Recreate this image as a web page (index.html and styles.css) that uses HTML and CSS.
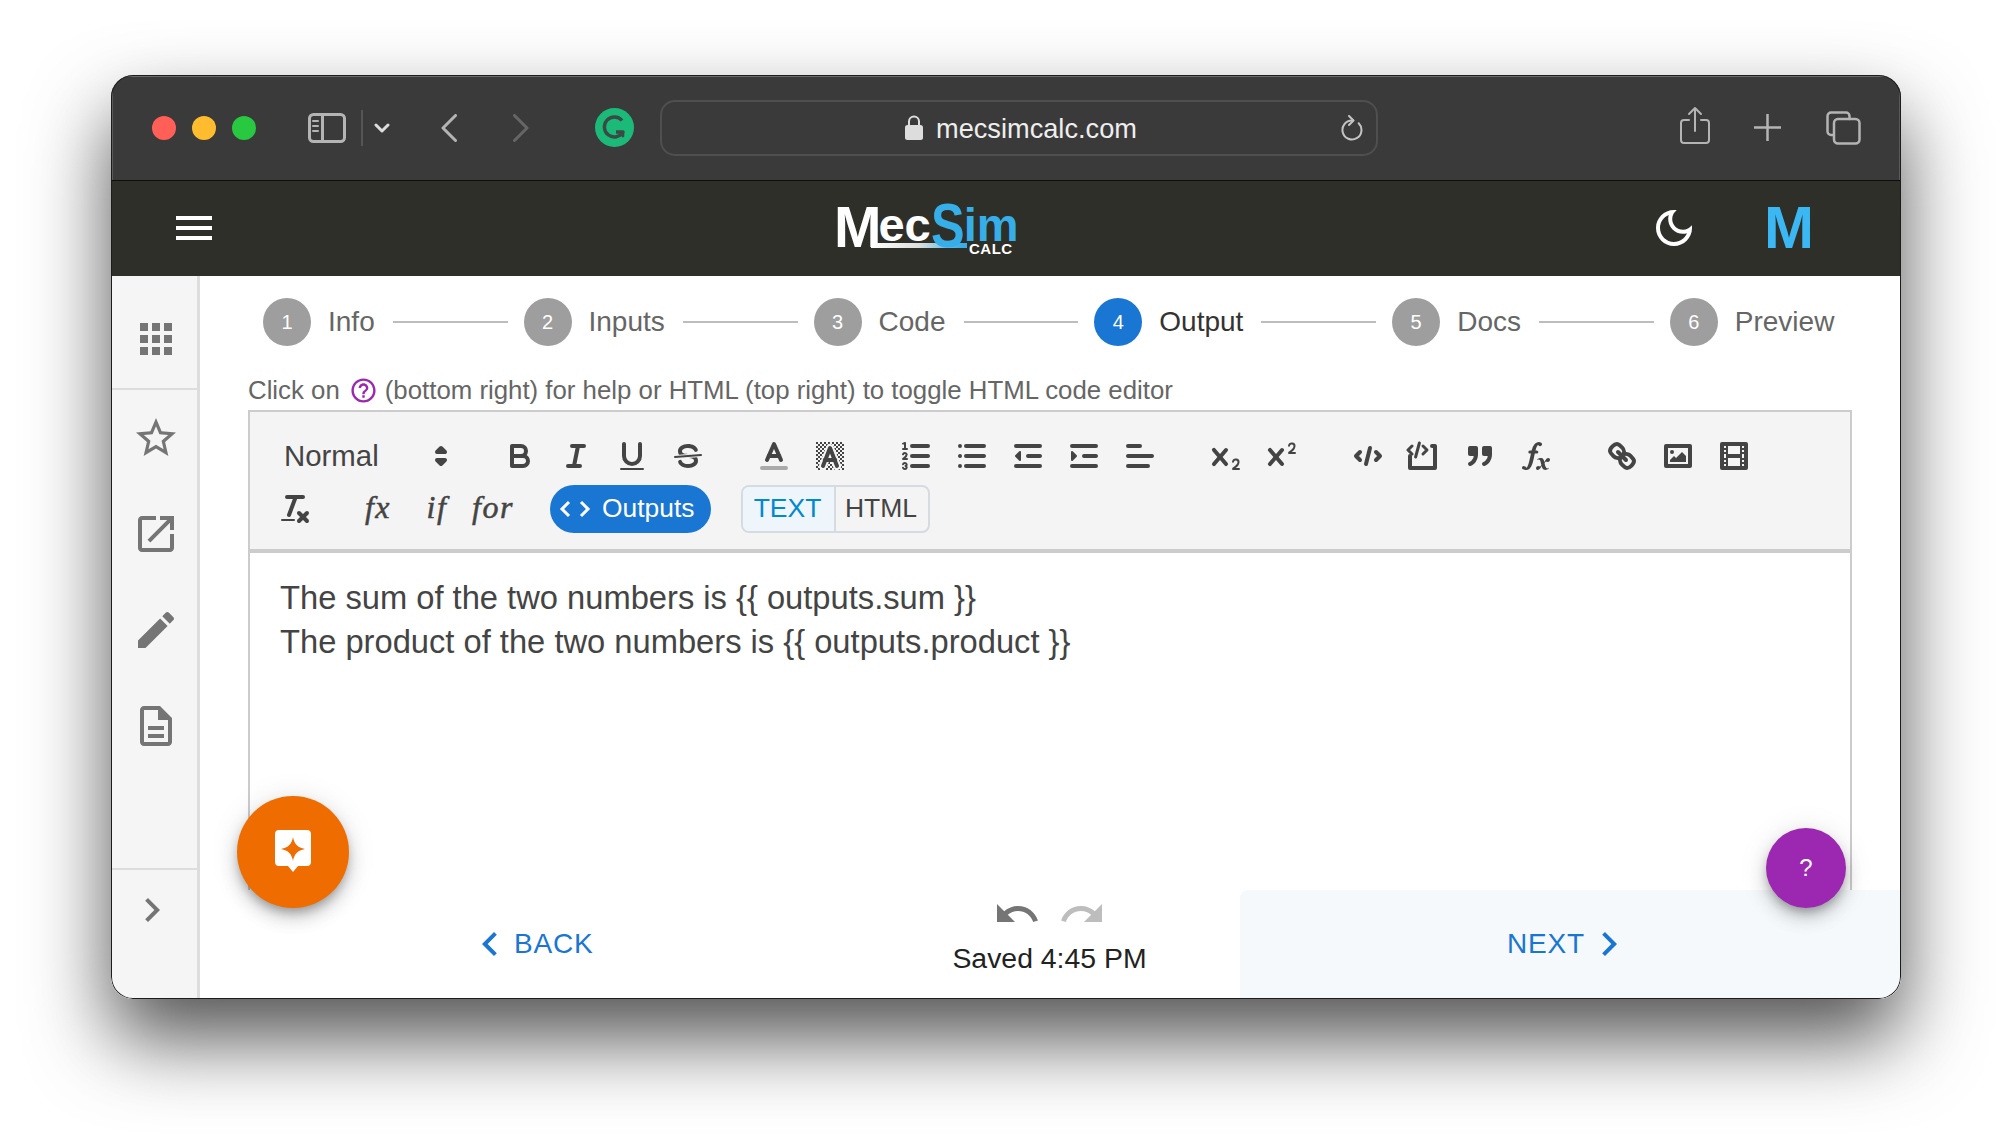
FILE: index.html
```html
<!DOCTYPE html>
<html lang="en">
<head>
<meta charset="UTF-8">
<meta name="viewport" content="width=device-width, initial-scale=1.0">
<title>MecSimCalc</title>
<link rel="stylesheet" href="styles.css">
</head>
<body>
<div class="window">
    <div class="titlebar">
        <span class="light red"></span>
        <span class="light yellow"></span>
        <span class="light green"></span>
        <svg class="tb-sidebar" width="38" height="30" viewBox="0 0 38 30"><rect x="1.5" y="1.5" width="35" height="27" rx="4"/><line x1="14.5" y1="1.5" x2="14.5" y2="28.5"/><path class="thin" d="M5 8h5M5 13h5M5 18h5"/></svg>
        <span class="tb-divider"></span>
        <svg class="tb-down" width="16" height="10" viewBox="0 0 16 10"><path d="M2 2l6 6 6-6"/></svg>
        <svg class="tb-back" width="16" height="28" viewBox="0 0 16 28"><path d="M14.5 1.5L2 14l12.5 12.5"/></svg>
        <svg class="tb-forward" width="16" height="28" viewBox="0 0 16 28"><path d="M1.5 1.5L14 14 1.5 26.5"/></svg>
        <svg class="tb-grammarly" width="39" height="39" viewBox="0 0 39 39"><circle cx="19.5" cy="19.5" r="19.5" fill="#1cba78"/><path d="M27 12.5a10 10 0 1 0 1 11.5h-7" fill="none" stroke="#3a4a44" stroke-width="3.4"/><path d="M24 24l4 4v-4" fill="none" stroke="#3a4a44" stroke-width="2.6"/></svg>
        <div class="url-bar">
            <svg class="lock" width="18" height="25" viewBox="0 0 18 25"><rect x="0" y="10" width="18" height="15" rx="2.5"/><path d="M4 11V6.5a5 5 0 0 1 10 0V11" fill="none" stroke="#ddd" stroke-width="2"/></svg>
            <span class="url-text">mecsimcalc.com</span>
            <svg class="reload" width="22" height="26" viewBox="0 0 22 26"><path d="M17.7 8.300A9.500 9.500 0 1 1 11 5.500"/><path d="M8 1l4.500 4.500L8 10"/></svg>
        </div>
        <svg class="tb-share" width="30" height="38" viewBox="0 0 30 38"><path d="M9 14H4a3 3 0 0 0-3 3v17a3 3 0 0 0 3 3h22a3 3 0 0 0 3-3V17a3 3 0 0 0-3-3h-5"/><path d="M15 25V2M9 8l6-6 6 6"/></svg>
        <svg class="tb-plus" width="27" height="27" viewBox="0 0 27 27"><path d="M13.5 0v27M0 13.5h27"/></svg>
        <svg class="tb-tabs" width="35" height="34" viewBox="0 0 35 34"><path d="M7 24H5a3.500 3.500 0 0 1-3.500-3.500V5A3.500 3.500 0 0 1 5 1.500h15A3.500 3.500 0 0 1 23.500 5v3"/><rect x="8" y="8" width="25.500" height="24.500" rx="4"/></svg>
    </div>

    <header class="app-header">
        <div class="burger"><span></span><span></span><span></span></div>
        <div class="logo">
            <span class="logo-line"></span>
            <span class="logo-big">M</span><span class="logo-small">ec</span><span class="logo-blue"><span class="logo-s">S</span><span class="logo-small">im</span></span>
            <span class="logo-calc">CALC</span>
        </div>
        <svg class="moon" width="48" height="48" viewBox="0 0 24 24"><path d="M9.37 5.51c-.18.64-.27 1.310-.27 1.990 0 4.080 3.320 7.400 7.400 7.400.68 0 1.350-.09 1.990-.27C17.450 17.190 14.930 19 12 19c-3.860 0-7-3.140-7-7 0-2.930 1.810-5.450 4.370-6.490zM12 3c-4.970 0-9 4.030-9 9s4.030 9 9 9 9-4.030 9-9c0-.46-.04-.92-.1-1.360-.98 1.370-2.580 2.260-4.400 2.260-2.980 0-5.400-2.420-5.400-5.400 0-1.810.89-3.420 2.260-4.400-.44-.06-.9-.1-1.360-.1z"/></svg>
        <span class="avatar">M</span>
    </header>

    <div class="app-main">
        <nav class="sidebar">
            <div class="side-top">
                <svg width="48" height="48" viewBox="0 0 24 24"><path d="M4 8h4V4H4v4zm6 12h4v-4h-4v4zm-6 0h4v-4H4v4zm0-6h4v-4H4v4zm6 0h4v-4h-4v4zm6-10v4h4V4h-4zm-6 4h4V4h-4v4zm6 6h4v-4h-4v4zm0 6h4v-4h-4v4z"/></svg>
            </div>
            <div class="side-links">
                <div class="side-item"><svg width="48" height="48" viewBox="0 0 24 24"><path d="M22 9.240l-7.190-.62L12 2 9.190 8.630 2 9.240l5.460 4.730L5.820 21 12 17.270 18.180 21l-1.630-7.030L22 9.240zM12 15.400l-3.760 2.270 1-4.280-3.320-2.880 4.380-.38L12 6.100l1.710 4.040 4.380.38-3.320 2.880 1 4.280L12 15.400z"/></svg></div>
                <div class="side-item"><svg width="48" height="48" viewBox="0 0 24 24"><path d="M19 19H5V5h7V3H5c-1.110 0-2 .9-2 2v14c0 1.100.89 2 2 2h14c1.100 0 2-.9 2-2v-7h-2v7zM14 3v2h3.590l-9.830 9.830 1.410 1.410L19 6.410V10h2V3h-7z"/></svg></div>
                <div class="side-item"><svg width="48" height="48" viewBox="0 0 24 24"><path d="M3 17.250V21h3.750L17.810 9.940l-3.750-3.750L3 17.250zM20.710 7.040c.39-.39.39-1.020 0-1.410l-2.340-2.340c-.39-.39-1.020-.39-1.410 0l-1.830 1.830 3.750 3.750 1.830-1.830z"/></svg></div>
                <div class="side-item"><svg width="48" height="48" viewBox="0 0 24 24"><path d="M8 16h8v2H8zm0-4h8v2H8zm6-10H6c-1.100 0-2 .9-2 2v16c0 1.100.89 2 2 2h12c1.100 0 2-.9 2-2V8l-6-6zm4 18H6V4h7v5h5v11z"/></svg></div>
            </div>
            <div class="side-bottom">
                <svg width="48" height="48" viewBox="0 0 24 24"><path d="M10 6L8.590 7.410 13.170 12l-4.580 4.590L10 18l6-6z"/></svg>
            </div>
        </nav>

        <main class="content">
            <div class="stepper">
                <span class="step-num">1</span><span class="step-label">Info</span><span class="step-line"></span>
                <span class="step-num">2</span><span class="step-label">Inputs</span><span class="step-line"></span>
                <span class="step-num">3</span><span class="step-label">Code</span><span class="step-line"></span>
                <span class="step-num active">4</span><span class="step-label active">Output</span><span class="step-line"></span>
                <span class="step-num">5</span><span class="step-label">Docs</span><span class="step-line"></span>
                <span class="step-num">6</span><span class="step-label">Preview</span>
            </div>

            <p class="hint">Click on <svg class="hint-icon" width="29" height="29" viewBox="0 0 24 24"><path d="M11 18h2v-2h-2v2zm1-16C6.480 2 2 6.480 2 12s4.480 10 10 10 10-4.480 10-10S17.520 2 12 2zm0 18c-4.410 0-8-3.590-8-8s3.590-8 8-8 8 3.590 8 8-3.590 8-8 8zm0-14c-2.210 0-4 1.790-4 4h2c0-1.100.9-2 2-2s2 .9 2 2c0 2-3 1.750-3 5h2c0-2.250 3-2.500 3-5 0-2.210-1.790-4-4-4z"/></svg> (bottom right) for help or HTML (top right) to toggle HTML code editor</p>

            <div class="editor">
                <div class="toolbar">
                    <div class="tool-row">
                        <div class="picker">
                            <span>Normal</span>
                            <svg width="36" height="36" viewBox="0 0 18 18"><polygon class="s f" points="7 11 9 13 11 11 7 11"/><polygon class="s f" points="7 7 9 5 11 7 7 7"/></svg>
                        </div>
                        <div class="group">
                            <span class="tool"><svg viewBox="0 0 18 18"><path class="s" d="M5,4H9.500A2.500,2.500,0,0,1,12,6.500v0A2.500,2.500,0,0,1,9.500,9H5A0,0,0,0,1,5,9V4A0,0,0,0,1,5,4Z"/><path class="s" d="M5,9h5.500A2.500,2.500,0,0,1,13,11.500v0A2.500,2.500,0,0,1,10.500,14H5a0,0,0,0,1,0,0V9A0,0,0,0,1,5,9Z"/></svg></span>
                            <span class="tool"><svg viewBox="0 0 18 18"><line class="s" x1="7" x2="13" y1="4" y2="4"/><line class="s" x1="5" x2="11" y1="14" y2="14"/><line class="s" x1="8" x2="10" y1="14" y2="4"/></svg></span>
                            <span class="tool"><svg viewBox="0 0 18 18"><path class="s" d="M5,3V9a4.006,4.006,0,0,0,4,4H9a4.006,4.006,0,0,0,4-4V3"/><rect class="f" height="1" rx="0.500" ry="0.500" width="12" x="3" y="15"/></svg></span>
                            <span class="tool"><svg viewBox="0 0 18 18"><line class="s thin" x1="15.500" x2="2.500" y1="8.500" y2="9.500"/><path class="f" d="M9.007,8C6.542,7.791,6,7.519,6,6.500,6,5.792,7.283,5,9,5c1.571,0,2.765.679,2.969,1.309a1,1,0,0,0,1.900-.617C13.356,4.106,11.354,3,9,3,6.200,3,4,4.538,4,6.500a3.200,3.200,0,0,0,.5,1.843Z"/><path class="f" d="M8.984,10C11.457,10.208,12,10.479,12,11.500c0,.708-1.283,1.500-3,1.500-1.571,0-2.765-.679-2.969-1.309a1,1,0,1,0-1.900.617C4.644,13.894,6.646,15,9,15c2.800,0,5-1.538,5-3.500a3.200,3.200,0,0,0-.5-1.843Z"/></svg></span>
                        </div>
                        <div class="group">
                            <span class="tool"><svg viewBox="0 0 18 18"><line class="s label" x1="3" x2="15" y1="15" y2="15"/><polyline class="s" points="5.500 11 9 3 12.500 11"/><line class="s" x1="11.630" x2="6.380" y1="9" y2="9"/></svg></span>
                            <span class="tool"><svg viewBox="0 0 18 18"><defs><pattern id="dots" width="2" height="2" patternUnits="userSpaceOnUse"><rect width="1" height="1" fill="#444"/><rect x="1" y="1" width="1" height="1" fill="#444"/></pattern></defs><rect x="2" y="2" width="14" height="14" fill="url(#dots)"/><polyline class="s halo" points="5.500 14 9 5 12.500 14"/><polyline class="s" points="5.500 14 9 5 12.500 14"/><line class="s" x1="11.630" x2="6.380" y1="11" y2="11"/></svg></span>
                        </div>
                        <div class="group">
                            <span class="tool"><svg viewBox="0 0 18 18"><line class="s" x1="7" x2="15" y1="4" y2="4"/><line class="s" x1="7" x2="15" y1="9" y2="9"/><line class="s" x1="7" x2="15" y1="14" y2="14"/><line class="s thin" x1="2.500" x2="4.500" y1="5.500" y2="5.500"/><path class="f" d="M3.500,6A0.500,0.500,0,0,1,3,5.500V3.085l-0.276.138A0.500,0.500,0,0,1,2.053,3c-0.124-.247-0.023-0.324.224-0.447l1-.5A0.500,0.500,0,0,1,4,2.500v3A0.500,0.500,0,0,1,3.500,6Z"/><path class="s thin" d="M4.500,10.500h-2c0-.234,1.850-1.076,1.850-2.234A0.959,0.959,0,0,0,2.500,8.156"/><path class="s thin" d="M2.500,14.846a0.959,0.959,0,0,0,1.850-.109A0.700,0.700,0,0,0,3.750,14a0.688,0.688,0,0,0,.6-0.736,0.959,0.959,0,0,0-1.850-.109"/></svg></span>
                            <span class="tool"><svg viewBox="0 0 18 18"><line class="s" x1="6" x2="15" y1="4" y2="4"/><line class="s" x1="6" x2="15" y1="9" y2="9"/><line class="s" x1="6" x2="15" y1="14" y2="14"/><line class="s" x1="3" x2="3" y1="4" y2="4"/><line class="s" x1="3" x2="3" y1="9" y2="9"/><line class="s" x1="3" x2="3" y1="14" y2="14"/></svg></span>
                            <span class="tool"><svg viewBox="0 0 18 18"><line class="s" x1="3" x2="15" y1="14" y2="14"/><line class="s" x1="3" x2="15" y1="4" y2="4"/><line class="s" x1="9" x2="15" y1="9" y2="9"/><polyline class="s f thin" points="5 7 5 11 3 9 5 7"/></svg></span>
                            <span class="tool"><svg viewBox="0 0 18 18"><line class="s" x1="3" x2="15" y1="14" y2="14"/><line class="s" x1="3" x2="15" y1="4" y2="4"/><line class="s" x1="9" x2="15" y1="9" y2="9"/><polyline class="s f thin" points="3 7 3 11 5 9 3 7"/></svg></span>
                            <span class="tool"><svg viewBox="0 0 18 18"><line class="s" x1="3" x2="15" y1="9" y2="9"/><line class="s" x1="3" x2="13" y1="14" y2="14"/><line class="s" x1="3" x2="9" y1="4" y2="4"/></svg></span>
                        </div>
                        <div class="group">
                            <span class="tool"><svg viewBox="0 0 18 18"><path class="f" d="M15.500,15H13.861a3.858,3.858,0,0,0,1.914-2.975,1.800,1.800,0,0,0-1.600-1.751A1.921,1.921,0,0,0,12.021,11.700a0.500,0.500,0,1,0,.957.291h0a0.914,0.914,0,0,1,1.053-.725,0.810,0.810,0,0,1,.744.762c0,1.076-1.170,1.870-1.940,2.431A1.456,1.456,0,0,0,12,15.500a0.500,0.500,0,0,0,.5.5h3A0.500,0.500,0,0,0,15.500,15Z"/><path class="f" d="M9.650,5.241a1,1,0,0,0-1.409.108L6,7.964,3.759,5.349A1,1,0,0,0,2.192,6.592q0.023.029.049.057L4.684,9.500,2.241,12.350A1,1,0,0,0,3.710,13.707q0.026-.028.049-.057L6,11.036,8.241,13.650a1,1,0,1,0,1.567-1.243Q9.785,12.378,9.759,12.350L7.316,9.500,9.759,6.651A1,1,0,0,0,9.650,5.241Z"/></svg></span>
                            <span class="tool"><svg viewBox="0 0 18 18"><path class="f" d="M15.500,7H13.861a4.015,4.015,0,0,0,1.914-2.975,1.800,1.800,0,0,0-1.600-1.751A1.922,1.922,0,0,0,12.021,3.700a0.500,0.500,0,1,0,.957.291,0.917,0.917,0,0,1,1.053-.725,0.810,0.810,0,0,1,.744.762c0,1.077-1.164,1.925-1.934,2.486A1.423,1.423,0,0,0,12,7.500a0.500,0.500,0,0,0,.5.5h3A0.500,0.500,0,0,0,15.500,7Z"/><path class="f" d="M9.651,5.241a1,1,0,0,0-1.410.108L6,7.964,3.759,5.349a1,1,0,1,0-1.519,1.300L4.683,9.500,2.241,12.350a1,1,0,1,0,1.519,1.300L6,11.036,8.241,13.650a1,1,0,0,0,1.519-1.300L7.317,9.500,9.759,6.651A1,1,0,0,0,9.651,5.241Z"/></svg></span>
                        </div>
                        <div class="group">
                            <span class="tool"><svg viewBox="0 0 18 18"><polyline class="s" points="5 7 3 9 5 11"/><polyline class="s" points="13 7 15 9 13 11"/><line class="s" x1="10" x2="8" y1="5" y2="13"/></svg></span>
                            <span class="tool"><svg viewBox="0 0 18 18"><path class="s" d="M13 4H14.500V15H2V9"/><polyline class="s thin15" points="3 4 1 6 3 8"/><polyline class="s thin15" points="8.500 4 10.500 6 8.500 8"/><line class="s thin15" x1="6.700" x2="4.800" y1="2.500" y2="9.500"/></svg></span>
                            <span class="tool"><svg viewBox="0 0 18 18"><rect class="s f" height="3" width="3" x="4" y="5"/><rect class="s f" height="3" width="3" x="11" y="5"/><path class="s" d="M7,8c0,4.031-3,5-3,5"/><path class="s" d="M14,8c0,4.031-3,5-3,5"/></svg></span>
                            <span class="tool"><svg viewBox="0 0 18 18"><path class="f" d="M11.759,2.482a2.561,2.561,0,0,0-3.530.607A7.656,7.656,0,0,0,6.800,6.200C6.109,9.188,5.275,14.677,4.150,14.927a1.545,1.545,0,0,0-1.300-.933A0.922,0.922,0,0,0,2,15.036S1.954,16,4.119,16s3.091-2.691,3.700-5.553c0.177-.826.360-1.726,0.554-2.600L8.775,6.200c0.381-1.421.807-2.521,1.306-2.676a1.014,1.014,0,0,0,1.020.560A0.966,0.966,0,0,0,11.759,2.482Z"/><rect class="f" height="1.600" rx="0.800" ry="0.800" width="5" x="5.150" y="6.200"/><path class="f" d="M13.663,12.027a1.662,1.662,0,0,1,.266-0.276q0.193,0.069.456,0.138a2.100,2.100,0,0,0,.535.069,1.075,1.075,0,0,0,.767-0.300,1.044,1.044,0,0,0,.314-0.800,0.840,0.840,0,0,0-.238-0.619,0.800,0.800,0,0,0-.594-0.239,1.154,1.154,0,0,0-.781.300,4.607,4.607,0,0,0-.781,1q-0.091.150-.218,0.346l-0.246.380c-0.068-.288-0.137-0.582-0.212-0.885-0.459-1.847-2.494-.984-2.941-0.800-0.482.2-.353,0.647-0.094,0.529a0.869,0.869,0,0,1,1.281.585c0.217,0.751.377,1.436,0.527,2.038a5.688,5.688,0,0,1-.362.467,2.690,2.690,0,0,1-.264.271q-0.221-.080-0.471-0.147a2.029,2.029,0,0,0-.522-0.066,1.079,1.079,0,0,0-.768.3A1.058,1.058,0,0,0,9,15.131a0.820,0.820,0,0,0,.832.852,1.134,1.134,0,0,0,.787-0.300,5.110,5.110,0,0,0,.776-0.993q0.141-.219.215-0.340c0.046-.076.122-0.194,0.223-0.346a2.786,2.786,0,0,0,.918,1.726,2.582,2.582,0,0,0,2.376-.185c0.317-.181.212-0.565,0-0.494A0.807,0.807,0,0,1,14.176,15a5.159,5.159,0,0,1-.913-2.446l0,0Q13.487,12.240,13.663,12.027Z"/></svg></span>
                        </div>
                        <div class="group">
                            <span class="tool"><svg viewBox="0 0 18 18"><line class="s" x1="7" x2="11" y1="7" y2="11"/><path class="s" d="M8.900,4.577a3.476,3.476,0,0,1,.36,4.679A3.476,3.476,0,0,1,4.577,8.900C3.185,7.500,2.035,6.400,4.217,4.217S7.500,3.185,8.900,4.577Z"/><path class="s" d="M13.423,9.100a3.476,3.476,0,0,0-4.679-.36,3.476,3.476,0,0,0,.36,4.679c1.392,1.392,2.500,2.542,4.679.36S14.815,10.500,13.423,9.100Z"/></svg></span>
                            <span class="tool"><svg viewBox="0 0 18 18"><rect class="s" height="10" width="12" x="3" y="4"/><circle class="f" cx="6" cy="7" r="1"/><polyline class="f" points="5 12 5 11 7 9 8 10 11 7 13 9 13 12 5 12"/></svg></span>
                            <span class="tool"><svg viewBox="0 0 18 18"><rect class="s" height="12" width="12" x="3" y="3"/><rect class="f" height="12" width="1" x="5" y="3"/><rect class="f" height="12" width="1" x="12" y="3"/><rect class="f" height="2" width="8" x="5" y="8"/><rect class="f" height="1" width="3" x="3" y="5"/><rect class="f" height="1" width="3" x="3" y="7"/><rect class="f" height="1" width="3" x="3" y="10"/><rect class="f" height="1" width="3" x="3" y="12"/><rect class="f" height="1" width="3" x="12" y="5"/><rect class="f" height="1" width="3" x="12" y="7"/><rect class="f" height="1" width="3" x="12" y="10"/><rect class="f" height="1" width="3" x="12" y="12"/></svg></span>
                        </div>
                    </div>
                    <div class="tool-row second">
                        <span class="tool clean"><svg viewBox="0 0 18 18"><line class="s" x1="5" x2="13" y1="3" y2="3"/><line class="s" x1="6" x2="9.350" y1="12" y2="3"/><line class="s" x1="11" x2="15" y1="11" y2="15"/><line class="s" x1="15" x2="11" y1="11" y2="15"/><rect class="f" height="1" rx="0.500" ry="0.500" width="7" x="2" y="14"/></svg></span>
                        <span class="tool word word-fx">fx</span>
                        <span class="tool word">if</span>
                        <span class="tool word">for</span>
                        <span class="outputs-btn"><svg width="32" height="18" viewBox="0 0 32 18"><path d="M10 2L3 9l7 7M22 2l7 7-7 7"/></svg>Outputs</span>
                        <div class="mode-toggle">
                            <span class="mode active">TEXT</span>
                            <span class="mode">HTML</span>
                        </div>
                    </div>
                </div>
                <div class="editor-body">
                    <p>The sum of the two numbers is {{ outputs.sum }}</p>
                    <p>The product of the two numbers is {{ outputs.product }}</p>
                </div>
            </div>

            <div class="bottom-bar">
                <div class="back-col">
                    <span class="nav-btn"><svg width="48" height="48" viewBox="0 0 24 24"><path d="M15.410 7.410L14 6l-6 6 6 6 1.410-1.410L10.830 12z"/></svg>BACK</span>
                </div>
                <div class="save-col">
                    <div class="history">
                        <svg class="undo" width="48" height="18" viewBox="0 7 24 9"><path d="M12.500 8c-2.650 0-5.050.99-6.900 2.600L2 7v9h9l-3.620-3.620c1.390-1.160 3.160-1.880 5.120-1.880 3.540 0 6.550 2.310 7.600 5.500l2.370-.78C21.080 11.030 17.150 8 12.500 8z"/></svg>
                        <svg class="redo" width="48" height="18" viewBox="0 7 24 9"><path d="M18.400 10.600C16.550 8.990 14.150 8 11.500 8c-4.650 0-8.580 3.030-9.960 7.220L3.900 16c1.050-3.190 4.050-5.500 7.600-5.500 1.950 0 3.730.72 5.120 1.880L13 16h9V7l-3.600 3.600z"/></svg>
                    </div>
                    <span class="saved">Saved 4:45 PM</span>
                </div>
                <div class="next-col">
                    <span class="nav-btn">NEXT<svg width="48" height="48" viewBox="0 0 24 24"><path d="M10 6L8.590 7.410 13.170 12l-4.580 4.590L10 18l6-6z"/></svg></span>
                </div>
            </div>
        </main>
    </div>

    <div class="fab fab-orange">
        <svg width="36" height="44" viewBox="0 0 36 44"><path d="M4 0h28a4 4 0 0 1 4 4v28a4 4 0 0 1-4 4h-9l-5 6-5-6H4a4 4 0 0 1-4-4V4a4 4 0 0 1 4-4z" fill="#fff"/><path d="M18 7c1.200 7 4.500 10.500 12 12-7.500 1.500-10.800 5-12 12-1.200-7-4.500-10.500-12-12 7.500-1.500 10.800-5 12-12z" fill="#ef6c00"/></svg>
    </div>
    <div class="fab fab-purple">?</div>
</div>
</body>
</html>
```

FILE: styles.css
```css
html, body {
    margin: 0;
    height: 100%;
    background-color: #fff;
    overflow: hidden;
}
body {
    font-family: "Liberation Sans", Arial, sans-serif;
    color: #444;
}
p {
    margin: 0;
}
.window {
    position: relative;
    width: 1790px;
    height: 924px;
    margin: 75px 0 0 111px;
    display: flex;
    flex-direction: column;
    border-radius: 22px;
    overflow: hidden;
    box-shadow: 0 40px 80px rgba(0,0,0,.68);
}
/* thin dark edge drawn over the window contents */
.window::after {
    content: "";
    position: absolute;
    inset: 0;
    border-radius: 22px;
    box-shadow: inset 0 0 0 1px #1c1c1c;
    pointer-events: none;
}

/* browser title bar */
.titlebar {
    flex: none;
    height: 106px;
    box-sizing: border-box;
    display: flex;
    align-items: center;
    padding-left: 41px;
    background-color: #3a3a3a;
    border-bottom: 1px solid #0e0e0e;
    box-shadow: inset 0 2px 0 #6a6a6a, inset 2px 0 0 #5a5a5a, inset -2px 0 0 #5a5a5a;
}
.titlebar svg {
    flex: none;
    fill: none;
    stroke: #b4b4b4;
    stroke-width: 3;
    stroke-linecap: round;
    stroke-linejoin: round;
}
.light {
    width: 24px;
    height: 24px;
    margin-right: 16px;
    border-radius: 50%;
}
.red { background-color: #ff5f57; }
.yellow { background-color: #febc2e; }
.green { background-color: #28c840; }
.tb-sidebar { margin-left: 36px; }
.titlebar .tb-sidebar .thin { stroke-width: 2; }
.tb-divider {
    width: 2px;
    height: 36px;
    margin-left: 15px;
    background-color: #555;
}
.tb-down { margin-left: 11px; }
.titlebar .tb-down { stroke: #ddd; stroke-width: 3; }
.tb-back { margin-left: 51px; }
.tb-forward { margin-left: 56px; }
.titlebar .tb-forward { stroke: #666; }
.tb-grammarly { margin-left: 66px; }
.titlebar .tb-grammarly { stroke: none; stroke-linecap: butt; }
.url-bar {
    width: 718px;
    height: 56px;
    box-sizing: border-box;
    margin-left: 26px;
    padding: 0 13px 0 243px;
    display: flex;
    align-items: center;
    border: 2px solid #4f4f4f;
    border-radius: 15px;
}
.titlebar .lock { fill: #ddd; stroke: none; }
.url-text {
    margin: 2px 0 0 13px;
    font-size: 27.2px;
    color: #eee;
}
.reload { margin-left: auto; }
.titlebar .reload { stroke: #c4c4c4; stroke-width: 2; }
.tb-share {
    margin: 0 0 5px 302px;
}
.titlebar .tb-share { stroke-width: 2; }
.tb-plus { margin-left: 44px; }
.titlebar .tb-plus { stroke-width: 2.5; stroke-linecap: butt; }
.tb-tabs { margin-left: 45px; }
.titlebar .tb-tabs { stroke-width: 2.5; }

/* app header */
.app-header {
    flex: none;
    height: 94px;
    padding: 0 0 1px 65px;
    display: flex;
    align-items: center;
    background-color: #2f2f2a;
}
.burger {
    width: 36px;
    display: flex;
    flex-direction: column;
    gap: 6px;
}
.burger span {
    height: 4px;
    background-color: #fff;
}
.logo {
    position: relative;
    width: 182px;
    height: 50px;
    box-sizing: border-box;
    margin-left: 622px;
    padding-top: 14px;
    line-height: 50px;
    white-space: nowrap;
    font-weight: bold;
    color: #fff;
}
.logo-big {
    font-size: 57px;
    line-height: 0;
    letter-spacing: -3px;
}
.logo-small {
    font-size: 47px;
    line-height: 0;
    vertical-align: 6px;
}
.logo-blue {
    color: #36aee8;
}
.logo-s {
    display: inline-block;
    width: 33px;
    font-size: 63px;
    line-height: 0;
    transform: scaleX(.8);
    transform-origin: left bottom;
}
.logo-line {
    position: absolute;
    left: 37px;
    top: 40px;
    width: 96px;
    height: 5px;
    background: linear-gradient(90deg, #fff 0%, #ddd 50%, #36aee8 95%);
}
.logo-calc {
    position: absolute;
    left: 135px;
    top: 40px;
    font-size: 15px;
    line-height: 12px;
    letter-spacing: .5px;
}
.moon {
    margin-left: auto;
    fill: #fff;
}
.avatar {
    width: 46px;
    margin: 0 91px 0 66px;
    font-size: 60px;
    font-weight: bold;
    line-height: 62px;
    text-align: center;
    color: #3bb8f3;
}

/* left rail */
.app-main {
    flex: 1;
    min-height: 0;
    display: flex;
}
.sidebar {
    flex: none;
    width: 86px;
    display: flex;
    flex-direction: column;
    background-color: #f5f5f5;
    border-right: 3px solid #ddd;
}
.sidebar svg {
    fill: #757575;
}
.side-top {
    height: 98px;
    display: flex;
    align-items: center;
    justify-content: center;
    padding: 14px 0 0 3px;
    border-bottom: 2px solid #ddd;
}
.side-links {
    flex: 1;
}
.side-item {
    height: 96px;
    display: flex;
    align-items: center;
    justify-content: center;
    padding-left: 3px;
}
.side-bottom {
    height: 131px;
    box-sizing: border-box;
    padding: 16px 0 0 17px;
    border-top: 2px solid #ddd;
}

/* stepper */
.content {
    flex: 1;
    min-width: 0;
    display: flex;
    flex-direction: column;
}
.stepper {
    flex: none;
    display: flex;
    align-items: center;
    padding: 22px 0 0 63px;
    white-space: nowrap;
}
.step-num {
    flex: none;
    width: 48px;
    height: 48px;
    display: flex;
    align-items: center;
    justify-content: center;
    border-radius: 50%;
    background-color: #9e9e9e;
    color: #fff;
    font-size: 20px;
}
.step-num.active {
    background-color: #1976d2;
}
.step-label {
    margin-left: 17px;
    font-size: 28px;
    color: #666;
}
.step-label.active {
    color: #333;
}
.step-line {
    width: 114.800px;
    height: 2px;
    margin: 0 16px 0 18px;
    background-color: #bdbdbd;
}
.hint {
    flex: none;
    height: 36px;
    margin: 26px 0 2px 48px;
    display: flex;
    align-items: center;
    font-size: 25.800px;
    color: #666;
    white-space: nowrap;
}
.hint-icon {
    margin: 0 7px 0 9px;
    fill: #9c27b0;
}

/* editor */
.editor {
    flex: 1;
    min-height: 0;
    width: 1604px;
    box-sizing: border-box;
    margin-left: 48px;
    display: flex;
    flex-direction: column;
    border: 2px solid #ccc;
    border-bottom: none;
}
.toolbar {
    flex: none;
    height: 141px;
    box-sizing: border-box;
    padding-top: 17px;
    background-color: #f4f4f4;
    border-bottom: 4px solid #ccc;
}
.tool-row {
    height: 53px;
    display: flex;
    align-items: center;
    padding-left: 20px;
}
.tool-row.second {
    padding-left: 17px;
}
.picker {
    width: 192px;
    box-sizing: border-box;
    margin-right: 30px;
    padding-left: 14px;
    display: flex;
    align-items: center;
    justify-content: space-between;
    font-size: 29.400px;
    color: #444;
}
.picker svg {
    width: 36px;
    height: 36px;
    margin-right: 3px;
}
.group {
    display: flex;
    margin-right: 30px;
}
.tool {
    flex: none;
    width: 56px;
    height: 53px;
    display: flex;
    align-items: center;
    justify-content: center;
}
.tool svg {
    width: 36px;
    height: 36px;
}
.s {
    fill: none;
    stroke: #444;
    stroke-width: 2;
    stroke-linecap: round;
    stroke-linejoin: round;
}
.s.f, .f {
    fill: #444;
}
.s.thin {
    stroke-width: 1;
}
.s.thin15 {
    stroke-width: 1.500;
}
.s.label {
    stroke: #aaa;
}
.s.halo {
    stroke: #f4f4f4;
    stroke-width: 4;
}
.tool.clean {
    margin-right: 27px;
}
.word {
    font-family: "Liberation Serif", "Times New Roman", serif;
    font-style: italic;
    font-size: 32px;
    color: #444;
    letter-spacing: 1.500px;
    -webkit-text-stroke: .5px #444;
    padding-bottom: 3px;
    height: 50px;
}
.word-fx {
    margin-right: 3px;
}
.outputs-btn {
    flex: none;
    width: 161px;
    height: 48px;
    box-sizing: border-box;
    margin: 0 30px 0 29px;
    padding-left: 9px;
    display: flex;
    align-items: center;
    gap: 11px;
    border-radius: 24px;
    background-color: #1976d2;
    color: #fff;
    font-size: 26.400px;
}
.outputs-btn svg {
    fill: none;
    stroke: #fff;
    stroke-width: 3;
}
.mode-toggle {
    flex: none;
    width: 189px;
    height: 48px;
    box-sizing: border-box;
    display: flex;
    border: 2px solid #d5dbe0;
    border-radius: 8px;
    overflow: hidden;
    font-size: 26.500px;
}
.mode {
    flex: 1;
    display: flex;
    align-items: center;
    justify-content: center;
    padding-right: 2px;
    color: #444;
}
.mode.active {
    flex: none;
    width: 89px;
    background-color: #eef5fb;
    border-right: 2px solid #d5dbe0;
    color: #0288d1;
}
.editor-body {
    flex: 1;
    padding: 23px 0 0 30px;
    background-color: #fff;
    font-size: 32.700px;
    line-height: 44px;
    color: #444;
}

/* bottom navigation */
.bottom-bar {
    flex: none;
    height: 109px;
    display: flex;
}
.nav-btn {
    display: flex;
    align-items: center;
    font-size: 28px;
    letter-spacing: .8px;
    color: #1976d2;
}
.nav-btn svg {
    fill: #1976d2;
}
.back-col {
    width: 659px;
    box-sizing: border-box;
    padding: 30px 0 0 266px;
}
.save-col {
    width: 381px;
    display: flex;
    flex-direction: column;
    align-items: center;
    padding-top: 14px;
}
.history {
    height: 18px;
    display: flex;
    gap: 17px;
}
.undo { fill: #757575; }
.redo { fill: #bdbdbd; }
.saved {
    margin-top: 16px;
    font-size: 28.400px;
    line-height: 40px;
    color: #222;
}
.next-col {
    flex: 1;
    box-sizing: border-box;
    padding: 30px 0 0 267px;
    background-color: #f5f9fc;
    border-top-left-radius: 8px;
}

/* floating buttons */
.fab {
    position: absolute;
    display: flex;
    align-items: center;
    justify-content: center;
    border-radius: 50%;
    color: #fff;
    box-shadow: 0 6px 10px -2px rgba(0,0,0,.25), 0 10px 18px rgba(0,0,0,.16), 0 2px 30px rgba(0,0,0,.1);
}
.fab-orange {
    left: 126px;
    top: 721px;
    width: 112px;
    height: 112px;
    background-color: #ef6c00;
}
.fab-purple {
    left: 1655px;
    top: 753px;
    width: 80px;
    height: 80px;
    background-color: #9c27b0;
    font-size: 24px;
}
```
